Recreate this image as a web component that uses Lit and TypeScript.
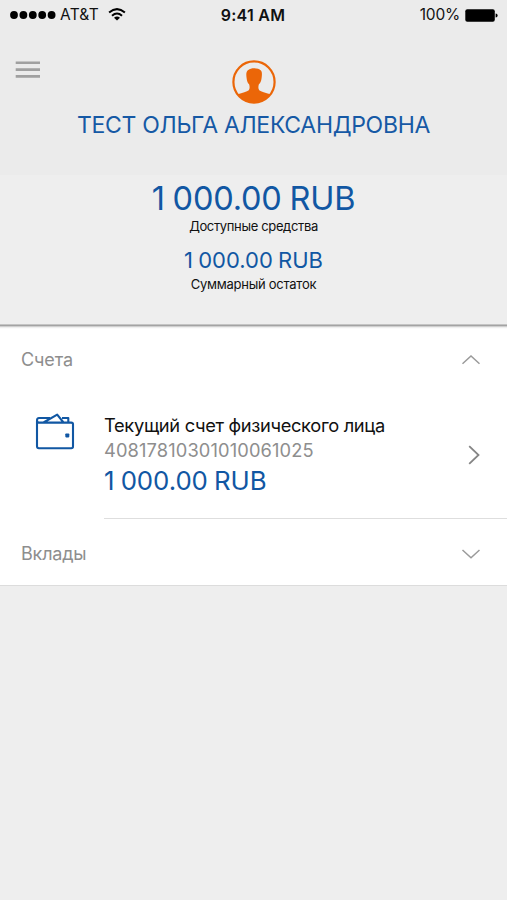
import { LitElement, html, css, svg } from "lit";
import { customElement, property } from "lit/decorators.js";

const paths = {
  up: svg`<path d="M1.5 8.7 10 1 18.5 8.7" />`,
  down: svg`<path d="M1.5 1 10 8.700 18.500 1" />`,
};

@customElement("section-header")
class SectionHeader extends LitElement {
  @property() label = "";
  @property() direction: "up" | "down" = "up";
  static styles = css`
    :host { display: flex; align-items: center; justify-content: space-between; padding: 0 26px 0 21px; color: #8e8e8e; font-size: 18px; line-height: 26px; }
    svg { display: block; width: 20px; height: 11px; fill: none; stroke: #9a9a9a; stroke-width: 1.5; }
    .up { letter-spacing: -0.1px; }
    .down { letter-spacing: -0.2px; }
  `;
  render() {
    return html`<span class=${this.direction}>${this.label}</span>
      <svg viewBox="0 0 20 11">${paths[this.direction]}</svg>`;
  }
}

@customElement("app-root")
class AppRoot extends LitElement {
  static styles = css`
    :host { display: block; box-sizing: border-box; height: 900px; overflow: hidden; background: #eee; font-family: Inter, "Liberation Sans", sans-serif; color: #111; }
    svg { display: block; }
    span, p { white-space: nowrap; margin: 0; }
    .top { height: 175px; background: #ebebeb; }
    .status { display: grid; grid-template-columns: 1fr auto 1fr; height: 30px; align-items: center; padding: 0 9px 0 10px; box-sizing: border-box; font-size: 15.5px; line-height: 20px; }
    .carrier { display: flex; align-items: center; }
    .carrier span { margin-left: 4px; letter-spacing: 0.25px; }
    .wifi { margin-left: 9px; }
    .time { font-weight: 600; font-size: 16px; letter-spacing: 0.25px; margin-right: 2px; }
    .battery { display: flex; align-items: center; justify-content: flex-end; gap: 5px; }
    .battery span { letter-spacing: -0.2px; }
    .profile { display: grid; grid-template-columns: 60px 1fr 60px; height: 52px; margin-top: 30px; }
    .menu { margin: 1px 0 0 15px; }
    .avatar { justify-self: center; }
    .name { height: 26px; line-height: 26px; text-align: center; font-size: 23px; color: #1659a5; letter-spacing: -0.3px; }
    .totals { display: flex; flex-direction: column; align-items: center; height: 149px; padding-top: 4px; box-sizing: border-box; }
    .money { color: #1157a3; word-spacing: -1px; }
    .big { font-size: 32.5px; line-height: 39px; letter-spacing: -0.2px; }
    .caption { font-size: 13px; line-height: 17px; letter-spacing: -0.35px; }
    .mid { font-size: 22px; line-height: 28px; margin-top: 11px; }
    .last { margin-top: 2px; letter-spacing: -0.26px; }
    .list { height: 262px; box-sizing: border-box; background: #fff; border-bottom: 1px solid #dcdcdc; }
    .edge { height: 5px; background: linear-gradient(#c4c4c4 0 1px, #a3a3a3 1px 2px, #cfcfcf 2px 3px, #efefef 3px 4px, #fbfbfb 4px); }
    .accounts { padding-top: 18px; }
    .account { display: grid; grid-template-columns: 40px 1fr 12px; column-gap: 29px; margin: 40px 26px 0 35px; }
    .details { display: flex; flex-direction: column; }
    .title { font-size: 18.3px; line-height: 25px; letter-spacing: -0.33px; }
    .number { font-size: 18.3px; line-height: 25px; color: #8e8e8e; letter-spacing: 0.12px; }
    .amount { font-size: 25.8px; line-height: 36px; letter-spacing: -0.05px; }
    .arrow { margin: 32px 0 0 -1px; }
    .rule { height: 1px; margin: 19px 0 0 104px; background: #dedede; }
    .deposits { padding-top: 22px; }
  `;
  render() {
    return html`
      <header class="top">
        <div class="status">
          <div class="carrier">
            <svg width="46" height="8" viewBox="0 0 46 8">${[4, 13.4, 22.8, 32.2, 41.6].map((x) => svg`<circle cx=${x} cy="4" r="3.9" />`)}</svg>
            <span>AT&amp;T</span>
            <svg class="wifi" width="18" height="14" viewBox="0 0 18 14"><g fill="none" stroke="#000" stroke-width="2"><path d="M1.1 4.6Q9-2.3 16.9 4.6" /><path d="M4 7.7Q9 3.3 14 7.7" /></g><path d="M6 9.7Q9 7.2 12 9.7L9 12.6Z" /></svg>
          </div>
          <span class="time">9:41 AM</span>
          <div class="battery">
            <span>100%</span>
            <svg width="33" height="13" viewBox="0 0 33 13"><rect x="0.3" y="0.3" width="29.5" height="12.4" rx="2" /><path d="M30.6 4.5Q32.6 4.7 32.6 6.5T30.6 8.5Z" /></svg>
          </div>
        </div>
        <div class="profile">
          <svg class="menu" width="26" height="18" viewBox="0 0 26 18"><path d="M.7 1.8H25M.7 8.6H25M.7 15.4H25" stroke="#a0a0a0" stroke-width="2.6" /></svg>
          <svg class="avatar" width="44" height="44" viewBox="0 0 44 44">
            <circle cx="22" cy="22" r="20.6" fill="none" stroke="#eb6608" stroke-width="2.2" />
            <path fill="#eb6608" d="M5.6 34.2C10.5 32.8 15 31.6 16.8 30.2 17.9 28.8 17.8 26.5 17.1 24.2 15.6 23.4 14.9 20.5 14.6 18 14.2 15 13.8 11.5 16.3 10 19 7.7 26.4 7.7 28.9 10.6 30.4 12.2 29.9 15.5 29.6 18 29.3 20.5 28.4 23.4 26.9 24.2 26.2 26.5 26.1 28.8 27.2 30.2 29 31.6 33.5 32.8 38.4 34.2 34.5 40 28.6 43 22 43S9.5 40 5.6 34.2Z" />
          </svg>
        </div>
        <p class="name">ТЕСТ ОЛЬГА АЛЕКСАНДРОВНА</p>
      </header>
      <section class="totals">
        <p class="money big">1 000.00 RUB</p>
        <p class="caption">Доступные средства</p>
        <p class="money mid">1 000.00 RUB</p>
        <p class="caption last">Суммарный остаток</p>
      </section>
      <main class="list">
        <div class="edge"></div>
        <section-header class="accounts" label="Счета" direction="up"></section-header>
        <div class="account">
          <svg width="40" height="38" viewBox="0 0 40 38"><g fill="none" stroke="#1157a3" stroke-width="2.1" stroke-linejoin="round"><path d="M2 7.4V33.2Q2 35.2 4 35.2H36.3Q38 35.2 38 33.5V11.2Q38 9.6 36.3 9.6H4Q2 9.6 2 7.4 2 5 4 5H15M27 5H33.3V9.5M8.5 9.5 22.2 1.7 28.5 9.5" /></g><rect x="30.3" y="20.4" width="4" height="4" rx=".8" fill="#1157a3" /></svg>
          <div class="details">
            <p class="title">Текущий счет физического лица</p>
            <p class="number">40817810301010061025</p>
            <p class="money amount">1 000.00 RUB</p>
          </div>
          <svg class="arrow" width="12" height="20" viewBox="0 0 12 20"><path d="M1.2 1.2 10.5 10 1.2 18.8" fill="none" stroke="#858585" stroke-width="1.8" /></svg>
        </div>
        <div class="rule"></div>
        <section-header class="deposits" label="Вклады" direction="down"></section-header>
      </main>
    `;
  }
}
